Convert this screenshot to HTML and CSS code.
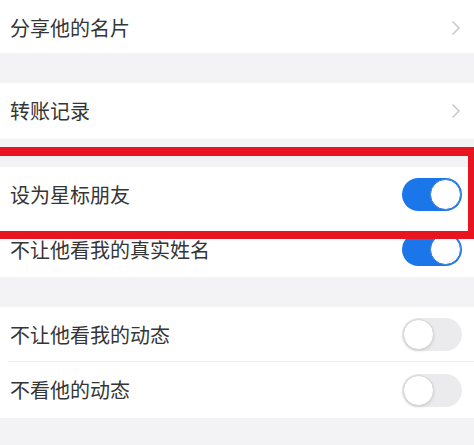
FILE: index.html
```html
<!DOCTYPE html>
<html lang="zh">
<head>
<meta charset="utf-8">
<link rel="stylesheet" href="styles.css">
</head>
<body>
<div class="page">
  <div class="group">
    <div class="row r53"><span class="label">分享他的名片</span>
      <svg class="chev" width="10" height="16" viewBox="0 0 10 16"><path d="M1.5 1.5 L8 8 L1.5 14.5" fill="none" stroke="#c9c9cb" stroke-width="1.5"/></svg>
    </div>
  </div>
  <div class="gap g30"></div>
  <div class="group">
    <div class="row r56"><span class="label">转账记录</span>
      <svg class="chev" width="10" height="16" viewBox="0 0 10 16"><path d="M1.5 1.5 L8 8 L1.5 14.5" fill="none" stroke="#c9c9cb" stroke-width="1.5"/></svg>
    </div>
  </div>
  <div class="gap g28"></div>
  <div class="group">
    <div class="row r55"><span class="label">设为星标朋友</span><span class="toggle on"><span class="knob"></span></span></div>
    <div class="row r55"><span class="label">不让他看我的真实姓名</span><span class="toggle on"><span class="knob"></span></span></div>
  </div>
  <div class="gap g30"></div>
  <div class="group">
    <div class="row r55 sep"><span class="label">不让他看我的动态</span><span class="toggle"><span class="knob"></span></span></div>
    <div class="row r56"><span class="label">不看他的动态</span><span class="toggle"><span class="knob"></span></span></div>
  </div>
  <div class="highlight"></div>
</div>
</body>
</html>
```
FILE: styles.css
```css
html, body {
  margin: 0;
  padding: 0;
  background: #f3f3f5;
}
.page {
  position: relative;
  width: 474px;
  height: 445px;
  overflow: hidden;
  font-family: "Noto Sans CJK SC", "Noto Sans", sans-serif;
}
.group {
  background: #ffffff;
}
.row {
  display: flex;
  align-items: center;
  justify-content: space-between;
  padding: 0 12px 0 10px;
  box-sizing: border-box;
  position: relative;
}
.r53 { height: 53px; padding-top: 3px; }
.r55 { height: 55px; }
.r56 { height: 56px; }
.sep::after {
  content: "";
  position: absolute;
  left: 8px;
  right: 0;
  bottom: 0;
  height: 1px;
  background: #efeff1;
}
.label {
  font-size: 20px;
  color: #353535;
  line-height: 1;
}
.chev {
  margin-right: 1px;
}
.gap.g30 { height: 30px; }
.gap.g28 { height: 28px; }
.toggle {
  width: 60px;
  height: 33px;
  border-radius: 17px;
  background: #ebebed;
  display: flex;
  align-items: center;
  padding: 1px;
  box-sizing: border-box;
}
.toggle .knob {
  width: 31px;
  height: 31px;
  border-radius: 50%;
  background: #ffffff;
  box-sizing: border-box;
  border: 1px solid #d6d6d8;
  box-shadow: 0 1px 3px rgba(0,0,0,0.12);
}
.toggle.on {
  background: #1b76ea;
  justify-content: flex-end;
}
.toggle.on .knob {
  border: 1.5px solid #3b7fd8;
  box-shadow: none;
}
.highlight {
  position: absolute;
  top: 147px;
  left: -10px;
  right: 0;
  height: 92px;
  box-sizing: border-box;
  border-top: 9px solid #e8141f;
  border-bottom: 8px solid #e8141f;
  border-right: 6px solid #e8141f;
  pointer-events: none;
}
```
